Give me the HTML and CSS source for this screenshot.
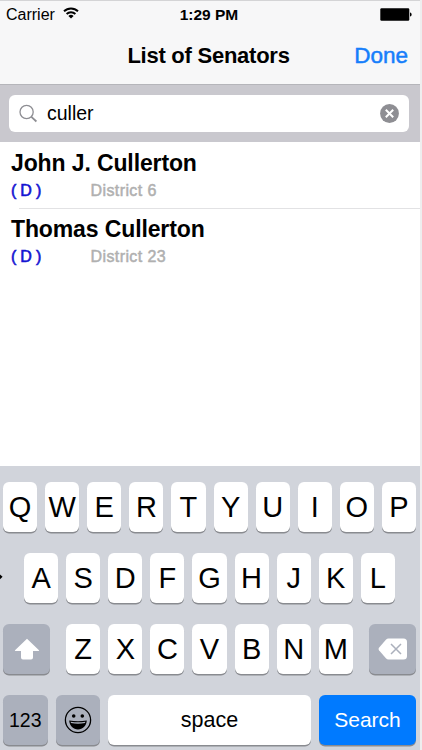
FILE: index.html
```html
<!DOCTYPE html>
<html lang="en">
<head>
    <meta charset="UTF-8">
    <meta name="viewport" content="width=device-width, initial-scale=1.0">
    <title>List of Senators</title>
    <link rel="stylesheet" href="styles.css">
</head>
<body>
    <div class="phone">
        <div class="status-bar">
            <div class="carrier">
                <span>Carrier</span>
                <svg class="wifi" width="16" height="12" viewBox="0 0 16 12">
                    <path d="M1 4.3a10 10 0 0 1 14 0M3.6 7a6.3 6.3 0 0 1 8.8 0" fill="none" stroke="#000" stroke-width="1.9"/>
                    <path d="M8 11.6L5.4 9a3.8 3.8 0 0 1 5.2 0z"/>
                </svg>
            </div>
            <div class="time">1:29 PM</div>
            <svg class="battery" width="32" height="13" viewBox="0 0 32 13">
                <rect x="0.3" y="0.3" width="29" height="12.4" rx="1.2"/>
                <path d="M30 4.4c2.2.4 2.2 3.8 0 4.2z"/>
            </svg>
        </div>

        <div class="nav-bar">
            <h1>List of Senators</h1>
            <button class="done">Done</button>
        </div>

        <div class="search-bar">
            <div class="search-field">
                <svg width="20" height="20" viewBox="0 0 20 20">
                    <circle cx="7.6" cy="8" r="6.6" fill="none" stroke="#8e8e93" stroke-width="1.3"/>
                    <path d="M12.4 12.8l5 4.7" stroke="#8e8e93" stroke-width="1.8"/>
                </svg>
                <span class="query">culler</span>
                <svg width="20" height="20" viewBox="0 0 20 20">
                    <circle cx="9.5" cy="9.5" r="9.4" fill="#8e8e93"/>
                    <path d="M5.8 5.8l7.4 7.4M13.2 5.8l-7.4 7.4" stroke="#fff" stroke-width="2"/>
                </svg>
            </div>
        </div>

        <div class="results">
            <div class="senator">
                <div class="name">John J. Cullerton</div>
                <div class="details"><span class="party">( D )</span><span class="district">District 6</span></div>
            </div>
            <div class="senator">
                <div class="name">Thomas Cullerton</div>
                <div class="details"><span class="party">( D )</span><span class="district">District 23</span></div>
            </div>
        </div>

        <div class="keyboard">
            <div class="key-row">
                <div class="key">Q</div><div class="key">W</div><div class="key">E</div><div class="key">R</div><div class="key">T</div><div class="key">Y</div><div class="key">U</div><div class="key">I</div><div class="key">O</div><div class="key">P</div>
            </div>
            <div class="key-row">
                <svg class="pointer" width="3" height="8" viewBox="0 0 3 8"><path d="M0 1.6l2.6 2.2L0 6.2z"/></svg>
                <div class="key">A</div><div class="key">S</div><div class="key">D</div><div class="key">F</div><div class="key">G</div><div class="key">H</div><div class="key">J</div><div class="key">K</div><div class="key">L</div>
            </div>
            <div class="key-row key-row-spread">
                <div class="key key-dark key-shift">
                    <svg width="26" height="22" viewBox="0 0 26 22">
                        <path d="M13 .8L25 12.2q.5.8-.5.8H19v6.500q0 2-2 2H9q-2 0-2-2V13H1.500q-1 0-.5-.8z" fill="#fff"/>
                    </svg>
                </div>
                <div class="key-group">
                    <div class="key">Z</div><div class="key">X</div><div class="key">C</div><div class="key">V</div><div class="key">B</div><div class="key">N</div><div class="key">M</div>
                </div>
                <div class="key key-dark key-delete">
                    <svg width="30" height="22" viewBox="0 0 30 22">
                        <path d="M10.5.5H25.5q3.5 0 3.5 3.5v14q0 3.5-3.5 3.5H10.5q-1.5 0-2.6-1.2L1 12.2q-1-1.200 0-2.400l6.900-8.100Q9 .5 10.5.5z" fill="#fff"/>
                        <path d="M13 6l10 10M23 6L13 16" stroke="#abb0bc" stroke-width="1.5"/>
                    </svg>
                </div>
            </div>
            <div class="key-row">
                <div class="key key-dark key-numbers">123</div>
                <div class="key key-dark key-emoji">
                    <svg width="28" height="28" viewBox="0 0 28 28">
                        <circle cx="14" cy="14" r="12.6" fill="none" stroke="#000" stroke-width="1.3"/>
                        <circle cx="9.7" cy="10" r="1.8"/>
                        <circle cx="18.3" cy="10" r="1.8"/>
                        <path d="M5.2 14.6q8.8 1.4 17.6 0c-.4 5.400-4.200 9-8.800 9s-8.400-3.600-8.800-9z"/>
                        <path d="M6.6 15.700q7.400 1.200 14.800 0l-.4 1.400q-7 1.400-14 0z" fill="#abb0bc"/>
                    </svg>
                </div>
                <div class="key key-space">space</div>
                <div class="key key-search">Search</div>
            </div>
        </div>
    </div>
</body>
</html>
```
FILE: styles.css
```css
body {
    margin: 0;
    background: #eeeeef;
    color: #000;
    font-family: "Liberation Sans", Arial, sans-serif;
}

.phone {
    width: 420px;
    height: 750px;
    display: flex;
    flex-direction: column;
    background: #fff;
    overflow: hidden;
}

.status-bar {
    box-sizing: border-box;
    height: 28px;
    display: grid;
    grid-template-columns: 1fr auto 1fr;
    align-items: center;
    padding: 0 8px 0 6px;
    background: #f7f7f8;
    border-top: 1px solid #d4d4d6;
    font-size: 16px;
}

.carrier {
    display: flex;
    align-items: center;
    gap: 8px;
}

.wifi {
    margin-top: -3px;
}

.time {
    font-weight: bold;
    font-size: 15.5px;
}

.battery {
    justify-self: end;
}

.nav-bar {
    box-sizing: border-box;
    height: 57px;
    display: grid;
    grid-template-columns: 1fr auto 1fr;
    align-items: center;
    padding: 0 12px 0 9px;
    background: #f7f7f8;
    border-bottom: 1px solid #b5b5ba;
}

h1 {
    grid-column: 2;
    margin: 0;
    font-size: 22px;
    letter-spacing: -0.25px;
}

.done {
    justify-self: end;
    padding: 0;
    border: none;
    background: none;
    color: #167efb;
    font-family: inherit;
    font-size: 22.5px;
    -webkit-text-stroke: 0.5px #167efb;
}

.search-bar {
    box-sizing: border-box;
    height: 57px;
    padding: 10px 11px 10px 9px;
    background: #c9c8ce;
}

.search-field {
    box-sizing: border-box;
    height: 37px;
    display: flex;
    align-items: center;
    padding: 0 9px 0 10px;
    background: #fff;
    border-radius: 6px;
}

.query {
    flex: 1;
    padding-left: 8px;
    font-size: 19.5px;
}

.results {
    flex: 1;
}

.senator {
    height: 66px;
    padding-left: 11px;
}

.senator + .senator {
    background: linear-gradient(#e2e2e4, #e2e2e4) 19px 0 / 100% 1px no-repeat;
}

.name {
    padding-top: 7px;
    font-size: 23px;
    font-weight: bold;
    line-height: 28px;
    letter-spacing: -0.12px;
}

.details {
    display: flex;
    font-size: 16px;
    line-height: 27px;
}

.party {
    width: 79.5px;
    color: #1414d2;
    letter-spacing: -0.2px;
    -webkit-text-stroke: 0.6px #1414d2;
}

.district {
    color: #b0b0b0;
    letter-spacing: 0.4px;
    -webkit-text-stroke: 0.5px #b0b0b0;
}

.keyboard {
    box-sizing: border-box;
    height: 284px;
    display: flex;
    flex-direction: column;
    gap: 21px;
    padding: 16px 4px 0 3px;
    background: #d1d4db;
}

.key-row,
.key-group {
    position: relative;
    display: flex;
    justify-content: center;
    gap: 8px;
}

.key-row-spread {
    justify-content: space-between;
}

.key {
    width: 34.1px;
    height: 50px;
    display: flex;
    flex-shrink: 0;
    align-items: center;
    justify-content: center;
    background: #fff;
    border-radius: 6px;
    box-shadow: 0 1.5px 0 #898b90;
    font-size: 29px;
}

.key-dark {
    background: #abb0bc;
}

.key-shift,
.key-delete {
    width: 47px;
}

.key-numbers,
.key-emoji {
    width: 44.5px;
    font-size: 19.5px;
}

.key-space {
    width: 203px;
    font-size: 21.5px;
}

.key-search {
    width: 97px;
    background: #007aff;
    color: #fff;
    font-size: 21px;
}

/* mouse pointer poking in from the left edge */
.pointer {
    position: absolute;
    left: -3px;
    top: 20px;
}
```
